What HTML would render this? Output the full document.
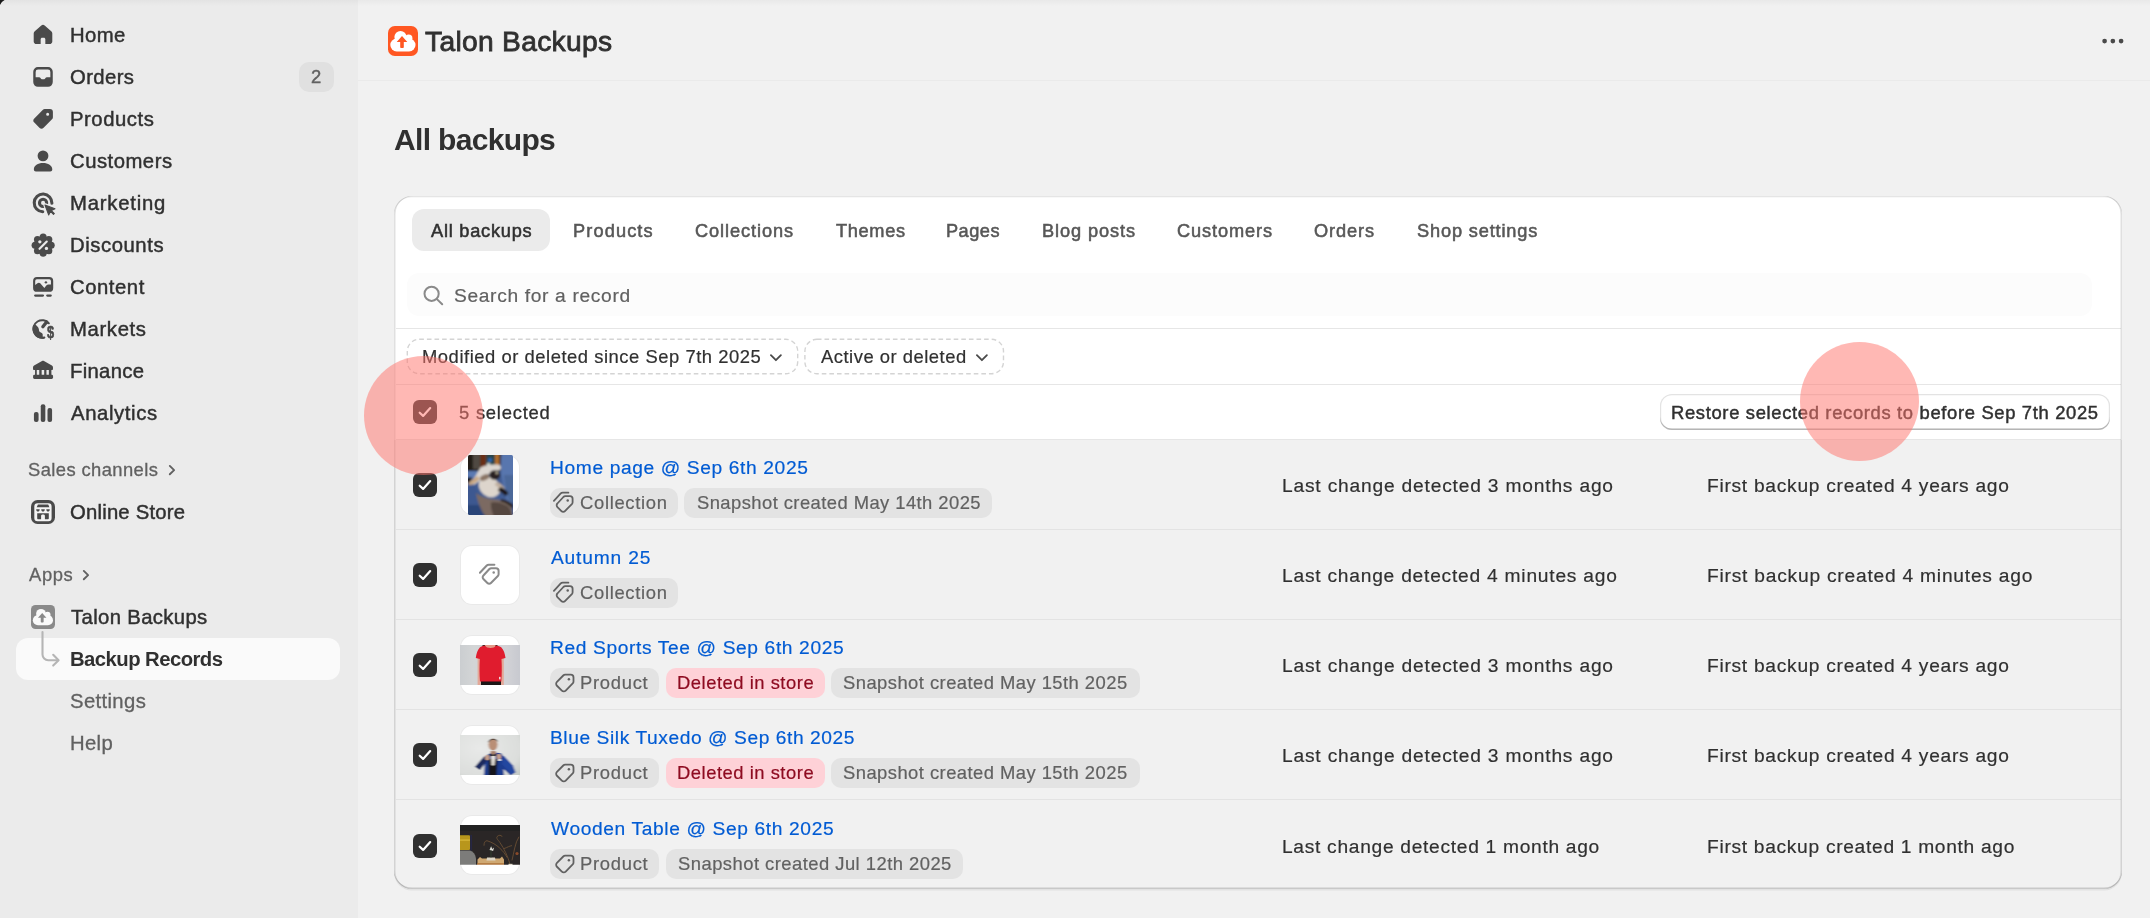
<!DOCTYPE html>
<html lang="en">
<head>
<meta charset="utf-8">
<title>Talon Backups – All backups</title>
<style>
html,body{margin:0;padding:0}
body{width:2150px;height:918px;overflow:hidden;position:relative;background:#f1f1f1;font-family:"Liberation Sans",sans-serif;-webkit-font-smoothing:antialiased}
.abs,.t,svg.i{position:absolute}
.t{white-space:nowrap;display:block;will-change:transform;margin:0;padding:0;font-weight:400;text-decoration:none}
#sidebar{position:absolute;left:0;top:0;width:358px;height:918px;background:#ebebeb}
#main{position:absolute;left:358px;top:0;width:1792px;height:918px;background:#f1f1f1}
#topshade{position:absolute;left:0;top:0;width:2150px;height:6px;background:linear-gradient(rgba(0,0,0,.035),rgba(0,0,0,0))}
.navsel{left:16px;top:638px;width:324px;height:42px;border-radius:12px;background:#fafafa}
.count{left:299px;top:62px;width:35px;height:30px;border-radius:10px;background:#e0e0e0}
#hdrline{left:358px;top:80px;width:1792px;height:1px;background:#eaeaea}
#card{left:394px;top:196px;width:1728px;height:693px;border-radius:18px;background:#fff;overflow:hidden}
#cardshadow{left:394px;top:196px;width:1728px;height:693px;border-radius:18px;z-index:5;pointer-events:none;
 box-shadow:0 1.5px 0 rgba(26,26,26,.07),inset 1.5px 0 0 rgba(0,0,0,.12),inset -1.5px 0 0 rgba(0,0,0,.12),inset 0 -1.5px 0 rgba(0,0,0,.17),inset 0 1.2px 0 rgba(204,204,204,.5)}
.tabsel{left:412px;top:209.3px;width:138px;height:42.2px;border-radius:12px;background:#ebebeb}
.search{left:406.5px;top:273px;width:1685px;height:43px;border-radius:12px;background:#fcfcfc}
.hl{left:395.5px;width:1725px;height:1.5px;background:#e6e6e6}
.rowbg{left:0;top:244px;width:1728px;height:449px;background:#f1f1f1}
.pill{height:33px;border-radius:12px;border:1.2px dashed #cfcfcf;box-sizing:content-box}
.btn{left:1659.5px;top:394px;width:450px;height:36px;border-radius:12px;background:#fff;box-sizing:border-box;
 box-shadow:inset 0 -1.5px 0 #b5b5b5,inset 0 0 0 1.2px #e3e3e3,inset 0 1px 0 1.5px #fff}
.cb{width:24px;height:24px;border-radius:6px;background:#303030}
.thumb{width:58px;height:58px;border-radius:11px;background:#fff;box-shadow:0 0 0 1px rgba(0,0,0,.03)}
.badge{height:30px;border-radius:10px;background:#e3e3e3}
.badge.crit{background:#fed1d7}
.dot{width:5px;height:5px;border-radius:50%;background:#4a4a4a;top:38.5px}
.halo{z-index:9;width:119px;height:119px;border-radius:50%;background:rgba(255,118,112,.52)}
</style>
</head>
<body>
<nav id="sidebar" aria-label="Main navigation">
<div id="navsel" class="abs navsel"></div>
<div class="abs count"></div>
<svg class="i" style="left:28px;top:20px" width="30" height="30" viewBox="0 0 20 20" fill="#4a4a4a"><path d="M10 3.2c.4 0 .8.15 1.1.4l4.4 3.9c.45.4.7.95.7 1.55v5.2c0 .95-.8 1.75-1.75 1.75h-2.9v-3.2c0-.55-.45-1-1-1h-1.1c-.55 0-1 .45-1 1v3.2h-2.9c-.95 0-1.75-.8-1.75-1.75v-5.2c0-.6.25-1.15.7-1.55l4.400-3.9c.3-.25.7-.4 1.1-.4z"/></svg>
<svg class="i" style="left:28px;top:62px" width="30" height="30" viewBox="0 0 20 20" fill="#4a4a4a"><path fill-rule="evenodd" d="M6.6 3.4h6.8a3.1 3.1 0 0 1 3.1 3.1v6.9a3.1 3.1 0 0 1-3.1 3.1h-6.8a3.1 3.1 0 0 1-3.1-3.1v-6.900a3.100 3.100 0 0 1 3.100-3.100zM6.700 5a1.600 1.600 0 0 0-1.600 1.600v3.500h2.400c.3 0 .55.150.7.4l.35.55c.15.250.4.4.7.4h1.500c.3 0 .55-.15.7-.4l.35-.55c.150-.25.4-.4.7-.4h2.400v-3.500a1.600 1.600 0 0 0-1.600-1.600z"/></svg>
<svg class="i" style="left:28px;top:104px" width="30" height="30" viewBox="0 0 20 20" fill="#4a4a4a"><path fill-rule="evenodd" d="M11.200 3.400h3.400a2 2 0 0 1 2 2v3.400c0 .55-.2 1.050-.6 1.400l-5.600 5.600a2 2 0 0 1-2.800 0l-3.400-3.400a2 2 0 0 1 0-2.800l5.600-5.600c.35-.4.85-.6 1.400-.6zM13.100 5.900a1 1 0 1 0 0 2a1 1 0 0 0 0-2z"/></svg>
<svg class="i" style="left:28px;top:146px" width="30" height="30" viewBox="0 0 20 20" fill="#4a4a4a"><circle cx="10" cy="6.600" r="3.600"/><path d="M3.900 15.700c0-2.600 2.700-4.300 6.100-4.300s6.200 1.700 6.200 4.300c0 .75-.6 1.300-1.300 1.300h-9.700c-.7 0-1.300-.55-1.300-1.300z"/></svg>
<svg class="i" style="left:28px;top:188px" width="30" height="30" viewBox="0 0 20 20" fill="#4a4a4a"><g fill="none" stroke="#4a4a4a" stroke-width="2.050" stroke-linecap="round"><path d="M15.950 10.200a5.900 5.900 0 1 0-6.100 5.650"/><circle cx="10.050" cy="9.950" r="2.400"/></g><path d="M11.300 11.300L18 13.800 15.600 15 17.600 17 17 17.600 15 15.600 13.800 18Z" fill="#4a4a4a" stroke="#ebebeb" stroke-width="2.300" stroke-linejoin="round"/><path d="M11.300 11.300L18 13.800 15.600 15 17.600 17 17 17.600 15 15.600 13.800 18Z" stroke="#4a4a4a" stroke-width=".7" stroke-linejoin="round"/></svg>
<svg class="i" style="left:28px;top:230px" width="30" height="30" viewBox="0 0 20 20" fill="#4a4a4a"><circle cx="10.1" cy="10.1" r="6.1"/><circle cx="10.10" cy="4.75" r="2.350"/><circle cx="13.88" cy="6.32" r="2.350"/><circle cx="15.45" cy="10.10" r="2.350"/><circle cx="13.88" cy="13.88" r="2.350"/><circle cx="10.10" cy="15.45" r="2.350"/><circle cx="6.32" cy="13.88" r="2.350"/><circle cx="4.75" cy="10.10" r="2.350"/><circle cx="6.32" cy="6.32" r="2.350"/><path d="M7.700 12.500l4.800-4.800" stroke="#ebebeb" stroke-width="1.450" stroke-linecap="round"/><circle cx="7.900" cy="7.900" r="1.100" fill="#ebebeb"/><circle cx="12.300" cy="12.300" r="1.100" fill="#ebebeb"/></svg>
<svg class="i" style="left:28px;top:272px" width="30" height="30" viewBox="0 0 20 20" fill="#4a4a4a"><path fill-rule="evenodd" d="M6 3.400h8.200a2.600 2.600 0 0 1 2.600 2.600v4.600a2.600 2.600 0 0 1-2.600 2.600h-8.200a2.600 2.600 0 0 1-2.600-2.600v-4.600a2.600 2.600 0 0 1 2.600-2.600zM4.800 6v2.700l1.500-1.200c.55-.45 1.300-.45 1.850 0l2.750 3.100 1.300-1.600c.4-.4.900-.6 1.450-.6h1.650v-2.400a1.100 1.100 0 0 0-1.100-1.100h-8.300a1.100 1.100 0 0 0-1.100 1.100z"/><circle cx="11.950" cy="6.900" r=".800"/><rect x="4.050" y="14.950" width="6.650" height="1.550" rx=".775"/><rect x="12.100" y="14.950" width="3.800" height="1.550" rx=".775"/></svg>
<svg class="i" style="left:28px;top:314px;will-change:transform" width="30" height="30" viewBox="0 0 20 20" fill="#4a4a4a"><path d="M13.900 6.200A5.850 5.850 0 1 0 10.900 15.650" fill="none" stroke="#4a4a4a" stroke-width="1.350" stroke-linecap="round"/><path d="M4 7.100L5.300 7.400C6.500 8.400 7.250 9.500 7.300 10.500C7.300 11.500 7.700 12 8.600 12.400C9.600 12.800 9.900 13.400 9.800 14.200L9.800 15.100L11.200 15.500L10.900 16.300A6.500 6.500 0 0 1 3.300 8Z"/><path d="M12.400 5.300L9.900 8.500" stroke="#4a4a4a" stroke-width="2.200" stroke-linecap="round"/><path d="M11.200 4.300l2.700 1.200-1.200 1.300z"/><text transform="translate(15.050 15.700) scale(.76 1)" font-family="Liberation Sans, sans-serif" font-weight="700" font-size="11.200" text-anchor="middle" fill="#4a4a4a" stroke="#4a4a4a" stroke-width=".35">$</text></svg>
<svg class="i" style="left:28px;top:356px" width="30" height="30" viewBox="0 0 20 20" fill="#4a4a4a"><path d="M9.350 3.350c.4-.22.900-.22 1.300 0l5.300 2.900c.45.250.7.700.7 1.200v1.150c0 .4-.3.700-.7.700h-11.900c-.4 0-.7-.3-.7-.700v-1.150c0-.5.250-.950.700-1.200z"/><rect x="4.700" y="9" width="1.150" height="4"/><rect x="7.500" y="9" width="1.600" height="4"/><rect x="10.800" y="9" width="1.500" height="4"/><rect x="13.900" y="9" width="1.700" height="4"/><rect x="3.400" y="12.500" width="13.300" height="2.750" rx=".900"/></svg>
<svg class="i" style="left:28px;top:398px" width="30" height="30" viewBox="0 0 20 20" fill="#4a4a4a"><rect x="3.950" y="9.300" width="3.100" height="6.700" rx="1.400"/><rect x="8.500" y="4.100" width="3.050" height="11.900" rx="1.400"/><rect x="13" y="6.600" width="3.050" height="9.400" rx="1.400"/></svg>
<svg class="i" style="left:31px;top:500px" width="24" height="24" viewBox="0 0 24 24"><rect width="24" height="24" rx="6.500" fill="#4a4a4a"/><rect x="3.300" y="3.200" width="17.300" height="18" rx="3.200" fill="#f4f4f4"/>
<path d="M6.900 4.600h10.300l1.200 2.700h-12.700z" fill="#4a4a4a"/>
<path d="M5.200 9.200h3.500c0 1.400-.8 2.400-1.750 2.400s-1.750-1-1.750-2.400zM10.200 9.200h3.600c0 1.400-.8 2.400-1.800 2.400s-1.800-1-1.800-2.400zM15.300 9.200h3.500c0 1.400-.8 2.400-1.750 2.400s-1.750-1-1.750-2.400z" fill="#4a4a4a"/>
<path d="M6.200 13.200h11.600v5c0 .6-.4 1-1 1h-2.900v-3.200c0-.8-.6-1.400-1.400-1.400h-1c-.8 0-1.400.6-1.400 1.400v3.200h-2.900c-.6 0-1-.4-1-1z" fill="#4a4a4a"/></svg>
<svg class="i" style="left:31px;top:605px" width="24" height="24" viewBox="0 0 30 30"><rect width="30" height="30" rx="5.6" fill="#8a8a8a"/>
<g fill="#fafafa"><circle cx="12.500" cy="11" r="6.100"/><circle cx="20.700" cy="12.200" r="3.700"/><rect x="2.300" y="12.600" width="25.200" height="12.800" rx="6.400"/></g>
<path d="M14 10l5.300 5.900h-3.500v5c0 .55-.45 1-1 1h-1.600c-.55 0-1-.45-1-1v-5h-3.500z" fill="#8a8a8a"/></svg>
<svg class="i" style="left:36px;top:628px" width="28" height="40" viewBox="0 0 28 40" fill="none" stroke="#b5b5b5" stroke-width="2.100" stroke-linecap="round" stroke-linejoin="round"><path d="M6.500 4v22.500a5.700 5.700 0 0 0 5.700 5.700h9.800"/><path d="M17.200 26.800l5.400 5.400-5.400 5.400"/></svg>
<svg class="i" style="left:165px;top:462px" width="14" height="16" viewBox="0 0 14 16" fill="none" stroke="#616161" stroke-width="1.900" stroke-linecap="round" stroke-linejoin="round"><path d="M4.800 3.900l4.300 4.200-4.300 4.200"/></svg>
<svg class="i" style="left:79.300px;top:567.300px" width="14" height="16" viewBox="0 0 14 16" fill="none" stroke="#616161" stroke-width="1.900" stroke-linecap="round" stroke-linejoin="round"><path d="M4.800 3.900l4.300 4.200-4.300 4.200"/></svg>
<a class="t" style="left:69.82px;top:22.97px;font-size:20.3px;line-height:24px;letter-spacing:0.383px;color:#303030;-webkit-text-stroke:0.45px #303030">Home</a>
<a class="t" style="left:69.88px;top:64.97px;font-size:20.3px;line-height:24px;letter-spacing:0.395px;color:#303030;-webkit-text-stroke:0.45px #303030">Orders</a>
<a class="t" style="left:69.82px;top:106.97px;font-size:20.3px;line-height:24px;letter-spacing:0.546px;color:#303030;-webkit-text-stroke:0.45px #303030">Products</a>
<a class="t" style="left:70.19px;top:148.97px;font-size:20.3px;line-height:24px;letter-spacing:0.497px;color:#303030;-webkit-text-stroke:0.45px #303030">Customers</a>
<a class="t" style="left:70.12px;top:190.97px;font-size:20.3px;line-height:24px;letter-spacing:0.785px;color:#303030;-webkit-text-stroke:0.45px #303030">Marketing</a>
<a class="t" style="left:69.82px;top:232.97px;font-size:20.3px;line-height:24px;letter-spacing:0.559px;color:#303030;-webkit-text-stroke:0.45px #303030">Discounts</a>
<a class="t" style="left:70.23px;top:274.97px;font-size:20.3px;line-height:24px;letter-spacing:0.551px;color:#303030;-webkit-text-stroke:0.45px #303030">Content</a>
<a class="t" style="left:69.82px;top:316.97px;font-size:20.3px;line-height:24px;letter-spacing:0.648px;color:#303030;-webkit-text-stroke:0.45px #303030">Markets</a>
<a class="t" style="left:69.99px;top:358.97px;font-size:20.3px;line-height:24px;letter-spacing:0.308px;color:#303030;-webkit-text-stroke:0.45px #303030">Finance</a>
<a class="t" style="left:70.81px;top:400.97px;font-size:20.3px;line-height:24px;letter-spacing:0.618px;color:#303030;-webkit-text-stroke:0.45px #303030">Analytics</a>
<span class="t" style="left:311.40px;top:65.62px;font-size:18.4px;line-height:22px;letter-spacing:0.000px;color:#616161;-webkit-text-stroke:0.45px #616161">2</span>
<a class="t" style="left:28.14px;top:458.62px;font-size:18.4px;line-height:22px;letter-spacing:0.397px;color:#616161;-webkit-text-stroke:0.3px #616161">Sales channels</a>
<a class="t" style="left:70.36px;top:499.97px;font-size:20.3px;line-height:24px;letter-spacing:0.204px;color:#303030;-webkit-text-stroke:0.45px #303030">Online Store</a>
<a class="t" style="left:28.75px;top:563.62px;font-size:18.4px;line-height:22px;letter-spacing:0.627px;color:#616161;-webkit-text-stroke:0.3px #616161">Apps</a>
<a class="t" style="left:70.93px;top:604.97px;font-size:20.3px;line-height:24px;letter-spacing:0.361px;color:#303030;-webkit-text-stroke:0.45px #303030">Talon Backups</a>
<a class="t" style="left:69.75px;top:646.97px;font-size:20.3px;line-height:24px;letter-spacing:-0.547px;color:#303030;font-weight:700">Backup Records</a>
<a class="t" style="left:70.09px;top:688.97px;font-size:20.3px;line-height:24px;letter-spacing:0.358px;color:#616161;-webkit-text-stroke:0.3px #616161">Settings</a>
<a class="t" style="left:69.86px;top:730.97px;font-size:20.3px;line-height:24px;letter-spacing:0.322px;color:#616161;-webkit-text-stroke:0.3px #616161">Help</a>
</nav>
<main id="main"></main>
<div id="topshade"></div>
<svg class="i" style="left:0;top:0" width="8" height="8" viewBox="0 0 8 8"><path d="M0 0H5.300Q1.800 1.600 0 5.700Z" fill="#f6f6f6"/><path d="M0 0H4.700Q1.500 1.400 0 5Z" fill="#1a1a1a"/></svg>
<header>
<div id="hdrline" class="abs"></div>
<svg class="i" style="left:388px;top:26px" width="30" height="30" viewBox="0 0 30 30"><rect width="30" height="30" rx="6.8" fill="#ff5722"/>
<g fill="#fff"><circle cx="12.500" cy="11" r="6.100"/><circle cx="20.700" cy="12.200" r="3.700"/><rect x="2.300" y="12.600" width="25.200" height="12.800" rx="6.400"/></g>
<path d="M14 10l5.300 5.900h-3.500v5c0 .55-.45 1-1 1h-1.600c-.55 0-1-.45-1-1v-5h-3.500z" fill="#ff5722"/></svg>
<span class="t" style="left:425.41px;top:24.23px;font-size:28.2px;line-height:34px;letter-spacing:0.310px;color:#303030;-webkit-text-stroke:0.8px #303030">Talon Backups</span>
<h1 class="t" style="left:394.49px;top:121.60px;font-size:30.0px;line-height:36px;letter-spacing:-0.665px;color:#303030;font-weight:700">All backups</h1>
<svg class="i" style="left:2098px;top:35px" width="30" height="12" viewBox="0 0 30 12" fill="#4a4a4a"><circle cx="6.600" cy="6.050" r="2.350"/><circle cx="14.850" cy="6.050" r="2.350"/><circle cx="23.100" cy="6.050" r="2.350"/></svg>
</header>
<section id="cardwrap">
<div id="card" class="abs"><div class="abs rowbg"></div></div>
<div id="cardshadow" class="abs"></div>
<div class="abs tabsel"></div>
<div class="abs search"></div>
<div class="abs hl" style="top:327.7px"></div>
<div class="abs hl" style="top:383.8px"></div>
<div class="abs hl" style="top:438.5px"></div>
<div class="abs hl" style="top:528.8px;background:#e3e3e3"></div>
<div class="abs hl" style="top:618.8px;background:#e3e3e3"></div>
<div class="abs hl" style="top:708.8px;background:#e3e3e3"></div>
<div class="abs hl" style="top:798.8px;background:#e3e3e3"></div>
<svg class="i" style="left:404px;top:336px" width="602" height="42" viewBox="0 0 602 42" fill="none" stroke="#d4d4d4" stroke-width="1.4" stroke-dasharray="4.6 3"><rect x="3.300" y="3.300" width="390.400" height="34.400" rx="12"/><rect x="400.900" y="3.300" width="198.600" height="34.400" rx="12"/></svg>
<div class="abs btn"></div>
<svg class="i" style="left:420px;top:282px" width="26" height="26" viewBox="0 0 26 26" fill="none" stroke="#8a8a8a" stroke-width="2" stroke-linecap="round"><circle cx="11.600" cy="11.800" r="7.100"/><path d="M16.900 17.100l5.300 5.200"/></svg>
<svg class="i" style="left:768.3px;top:351px" width="16" height="13" viewBox="0 0 16 13" fill="none" stroke="#4a4a4a" stroke-width="1.800" stroke-linecap="round" stroke-linejoin="round"><path d="M2.900 4.200l5 5 5-5"/></svg>
<svg class="i" style="left:973.9px;top:351px" width="16" height="13" viewBox="0 0 16 13" fill="none" stroke="#4a4a4a" stroke-width="1.800" stroke-linecap="round" stroke-linejoin="round"><path d="M2.900 4.200l5 5 5-5"/></svg>
<div class="abs cb" style="left:413.300px;top:400px"><svg width="24" height="24" viewBox="0 0 24 24" fill="none" stroke="#fff" stroke-width="2.200" stroke-linecap="round" stroke-linejoin="round"><path d="M6.700 12.700l3.400 3.200 7.100-7.800"/></svg></div>
<a class="t" role="tab" style="left:431.40px;top:219.69px;font-size:18.2px;line-height:22px;letter-spacing:0.763px;color:#303030;-webkit-text-stroke:0.55px #303030">All backups</a>
<a class="t" role="tab" style="left:573.26px;top:219.69px;font-size:18.2px;line-height:22px;letter-spacing:1.121px;color:#575757;-webkit-text-stroke:0.55px #575757">Products</a>
<a class="t" role="tab" style="left:695.44px;top:219.69px;font-size:18.2px;line-height:22px;letter-spacing:0.915px;color:#575757;-webkit-text-stroke:0.55px #575757">Collections</a>
<a class="t" role="tab" style="left:836.32px;top:219.69px;font-size:18.2px;line-height:22px;letter-spacing:0.669px;color:#575757;-webkit-text-stroke:0.55px #575757">Themes</a>
<a class="t" role="tab" style="left:946.28px;top:219.69px;font-size:18.2px;line-height:22px;letter-spacing:0.479px;color:#575757;-webkit-text-stroke:0.55px #575757">Pages</a>
<a class="t" role="tab" style="left:1042.20px;top:219.69px;font-size:18.2px;line-height:22px;letter-spacing:0.894px;color:#575757;-webkit-text-stroke:0.55px #575757">Blog posts</a>
<a class="t" role="tab" style="left:1177.36px;top:219.69px;font-size:18.2px;line-height:22px;letter-spacing:0.888px;color:#575757;-webkit-text-stroke:0.55px #575757">Customers</a>
<a class="t" role="tab" style="left:1314.31px;top:219.69px;font-size:18.2px;line-height:22px;letter-spacing:0.888px;color:#575757;-webkit-text-stroke:0.55px #575757">Orders</a>
<a class="t" role="tab" style="left:1417.11px;top:219.69px;font-size:18.2px;line-height:22px;letter-spacing:0.846px;color:#575757;-webkit-text-stroke:0.55px #575757">Shop settings</a>
<span class="t" style="left:454.43px;top:283.85px;font-size:19.2px;line-height:23px;letter-spacing:0.660px;color:#616161;-webkit-text-stroke:0.2px #616161">Search for a record</span>
<span class="t" style="left:422.16px;top:345.62px;font-size:18.4px;line-height:22px;letter-spacing:0.534px;color:#303030;-webkit-text-stroke:0.2px #303030">Modified or deleted since Sep 7th 2025</span>
<span class="t" style="left:821.19px;top:345.62px;font-size:18.4px;line-height:22px;letter-spacing:0.508px;color:#303030;-webkit-text-stroke:0.2px #303030">Active or deleted</span>
<span class="t" style="left:458.63px;top:401.62px;font-size:18.4px;line-height:22px;letter-spacing:0.776px;color:#303030;-webkit-text-stroke:0.3px #303030">5 selected</span>
<span class="t" role="button" style="left:1670.71px;top:401.62px;font-size:18.4px;line-height:22px;letter-spacing:0.661px;color:#303030;-webkit-text-stroke:0.45px #303030">Restore selected records to before Sep 7th 2025</span>
<div class="abs cb" style="left:413.300px;top:473px"><svg width="24" height="24" viewBox="0 0 24 24" fill="none" stroke="#fff" stroke-width="2.200" stroke-linecap="round" stroke-linejoin="round"><path d="M6.700 12.700l3.400 3.200 7.100-7.800"/></svg></div>
<div class="abs thumb" style="left:461px;top:455.5px"></div>
<div class="abs cb" style="left:413.300px;top:563px"><svg width="24" height="24" viewBox="0 0 24 24" fill="none" stroke="#fff" stroke-width="2.200" stroke-linecap="round" stroke-linejoin="round"><path d="M6.700 12.700l3.400 3.200 7.100-7.800"/></svg></div>
<div class="abs thumb" style="left:461px;top:545.5px"></div>
<div class="abs cb" style="left:413.300px;top:653px"><svg width="24" height="24" viewBox="0 0 24 24" fill="none" stroke="#fff" stroke-width="2.200" stroke-linecap="round" stroke-linejoin="round"><path d="M6.700 12.700l3.400 3.200 7.100-7.800"/></svg></div>
<div class="abs thumb" style="left:461px;top:635.5px"></div>
<div class="abs cb" style="left:413.300px;top:743px"><svg width="24" height="24" viewBox="0 0 24 24" fill="none" stroke="#fff" stroke-width="2.200" stroke-linecap="round" stroke-linejoin="round"><path d="M6.700 12.700l3.400 3.200 7.100-7.800"/></svg></div>
<div class="abs thumb" style="left:461px;top:725.5px"></div>
<div class="abs cb" style="left:413.300px;top:833.75px"><svg width="24" height="24" viewBox="0 0 24 24" fill="none" stroke="#fff" stroke-width="2.200" stroke-linecap="round" stroke-linejoin="round"><path d="M6.700 12.700l3.400 3.200 7.100-7.800"/></svg></div>
<div class="abs thumb" style="left:461px;top:816.25px"></div>
<svg class="i" style="left:467.500px;top:455px" width="45" height="60" viewBox="0 0 45 60"><defs><filter id="b1" x="-10%" y="-10%" width="120%" height="120%"><feGaussianBlur stdDeviation="1.150"/></filter><clipPath id="c1"><rect width="45" height="60" rx="1.500"/></clipPath></defs><g clip-path="url(#c1)"><g filter="url(#b1)">
<rect x="-4" y="-4" width="53" height="68" fill="#405c93"/>
<rect x="-4" y="-4" width="39" height="20" fill="#221c18"/>
<rect x="5" y="-3" width="7.500" height="17" fill="#4f4843"/><rect x="12.500" y="-3" width="5.500" height="18" fill="#6b2f14"/>
<rect x="18" y="-3" width="9" height="15" fill="#2a4446"/><circle cx="22" cy="5" r="2" fill="#2b68c0"/><circle cx="20.500" cy="9.500" r="1.700" fill="#cfd4d0"/>
<rect x="27" y="-3" width="4.500" height="13" fill="#b06d2c"/><rect x="31.500" y="-3" width="3" height="11" fill="#32241a"/>
<path d="M33.500 -4h15v52h-9c-3-12-6.500-26-7-36z" fill="#5876ae"/>
<path d="M36 20h13v28h-8c-2-9-4-18-5-28z" fill="#4b6899"/>
<path d="M-4 16h15c1 2 .5 5-1 7h-14z" fill="#5b7ab2"/>
<path d="M-4 22.500h8l-1.500 5h-6.500z" fill="#15151a"/>
<path d="M-4 30h10c4 10 10 20 20 32h-30z" fill="#3c5890"/>
<path d="M-4 50h20l9 14h-29z" fill="#2b4478"/>
<path d="M12.500 12.500c5-2.500 13-3.500 19-2.500 1.800 1.200 1.800 3.400.5 4.800-5 1.500-11 3.500-15 7-4 3-7 5.500-11 8-2.500-.5-3-2.500-2-4 3.500-4 5.500-8.500 8.500-13.300z" fill="#dcd6d0"/>
<path d="M1 27.500c2-2 5-3.800 8.500-6.500l2 3c-2.500 3-6 5.200-9.500 6.200-1.500-.5-2-1.700-1-2.700z" fill="#c9a883"/>
<ellipse cx="21.500" cy="32" rx="11.500" ry="9.500" transform="rotate(38 21.500 32)" fill="#ddd5cc"/>
<ellipse cx="16.500" cy="22.500" rx="5" ry="2.800" transform="rotate(-25 16.500 22.500)" fill="#8a7565"/>
<ellipse cx="26.800" cy="20" rx="5.500" ry="4.800" fill="#2a2420"/>
<circle cx="28.800" cy="17.800" r="1.400" fill="#b8b09a"/>
<path d="M29 27c3 1.200 6 3.500 8 6.500l-4 2.500c-2-2.500-4-5-6.500-6.500z" fill="#bfae9e"/>
<path d="M32.500 32c3 1 6.500 3.500 8 6.500l-3 2.500c-2.500-2.500-5-4.500-8-5.500z" fill="#1d1715"/>
<path d="M8 38c4 3.500 12 6.500 21.500 6.500 5 1 9.500 3 12.500 6 2 3 3 7 2.500 14h-24c-6-5.500-10.500-15-12.500-26.500z" fill="#7b6b62"/>
<path d="M23 47.500c6-1 14 1 18 5 2 3 3 7 2.500 12h-16c-3-5-5-11.500-4.500-17z" fill="#54463f"/>
<path d="M33 44c4 .5 8.500 2.500 12 5.500v4.500c-3.500-3.500-7.500-6.500-12.500-7.500z" fill="#2a201c"/>
</g></g></svg>
<svg class="i" style="left:460px;top:644.600px" width="60" height="40.200" viewBox="0 0 60 41" preserveAspectRatio="none"><defs><filter id="b2" x="-10%" y="-10%" width="120%" height="120%"><feGaussianBlur stdDeviation="0.700"/></filter><clipPath id="c2"><rect width="60" height="41"/></clipPath><linearGradient id="g2" x1="0" x2="1"><stop offset="0" stop-color="#c9cccf"/><stop offset=".25" stop-color="#d3d5d6"/><stop offset=".75" stop-color="#d2d2d6"/><stop offset="1" stop-color="#c5c7ce"/></linearGradient></defs><g clip-path="url(#c2)"><g filter="url(#b2)">
<rect x="-3" y="-3" width="66" height="47" fill="url(#g2)"/>
<rect x="17.600" y="10" width="3.200" height="34" fill="#e3a898"/><rect x="40.600" y="10" width="3.200" height="34" fill="#e3a898"/>
<rect x="21" y="35" width="20" height="9" fill="#1a1214"/>
<path d="M22.500 -3h15v5h-15z" fill="#3a2520"/>
<path d="M25 0h10.500v6h-10.500z" fill="#e29a88"/>
<path d="M20 2.200c2-1 3.800-1.500 5.300-1.500 1 3 9.400 3 10.400 0 1.500 0 3.500.5 5.500 1.500 2.600 2.600 3.800 6.800 4.300 11l-4 1c.4 8 .4 15.500-.2 23h-21.300c-.6-7.500-.6-15-.200-23l-4-1c.5-4.200 1.700-8.400 4.200-11z" fill="#e01c2e"/>
<rect x="39" y="32.500" width="1.600" height="2.600" fill="#f0d8dc"/>
</g></g></svg>
<svg class="i" style="left:460px;top:734.700px" width="60" height="40.200" viewBox="0 0 60 41" preserveAspectRatio="none"><defs><filter id="b3" x="-10%" y="-10%" width="120%" height="120%"><feGaussianBlur stdDeviation="0.800"/></filter><clipPath id="c3"><rect width="60" height="41"/></clipPath><radialGradient id="g3" cx=".35" cy=".35" r=".85"><stop offset="0" stop-color="#e8e9e8"/><stop offset=".7" stop-color="#dcdedc"/><stop offset="1" stop-color="#c2c7c2"/></radialGradient></defs><g clip-path="url(#c3)"><g filter="url(#b3)">
<rect x="-3" y="-3" width="66" height="47" fill="url(#g3)"/>
<path d="M24.500 22l7.500-4.500 9 1 7 8.500 6 11-3.500 3-7-6.500 1 10h-21l1-13z" fill="#1f3c90"/>
<path d="M15 32.500l9-10.500 4 2.800-8 11z" fill="#1a2a5e"/>
<path d="M44 21.500l9 9.500 2.500 7-4 2.500-9.500-11z" fill="#2446a0"/>
<path d="M28.500 24.500h9l-1 20h-8z" fill="#18181a"/>
<path d="M31 19.500h4.500l-1 10.500-1.500 2-1.500-2z" fill="#ece8e0"/>
<ellipse cx="33" cy="9.800" rx="4.500" ry="6.100" fill="#b98f76"/>
<path d="M28.400 8c-.4-5 9.300-6 9.500-.5-1-1.700-3-2.800-4.800-2.800s-3.700 1.300-4.700 3.300z" fill="#3a2a20"/>
<path d="M30.500 16.500h5.500v3.500h-5.500z" fill="#a9826c"/>
<path d="M30.300 19.200l2.900 1 2.900-1v2.700l-2.900-1-2.900 1z" fill="#15100e"/>
<ellipse cx="27.300" cy="23" rx="2.300" ry="2.900" fill="#c8a088"/><ellipse cx="38.900" cy="22" rx="2.300" ry="2.900" fill="#c8a088"/>
<rect x="38" y="24.500" width="3" height="2" fill="#e4e4ec"/>
</g></g></svg>
<svg class="i" style="left:460px;top:825px" width="60" height="39.800" viewBox="0 0 60 40.500" preserveAspectRatio="none"><defs><filter id="b4" x="-10%" y="-10%" width="120%" height="120%"><feGaussianBlur stdDeviation="0.600"/></filter><clipPath id="c4"><rect width="60" height="40.500"/></clipPath></defs><g clip-path="url(#c4)"><g filter="url(#b4)">
<rect x="-3" y="-3" width="66" height="47" fill="#2a2826"/>
<rect x="-3" y="-3" width="66" height="9" fill="#242220"/>
<rect x="-3" y="10.500" width="13" height="15" rx="1" fill="#b8961c"/><rect x="-3" y="14.500" width="13" height="1.800" fill="#cfae30"/>
<rect x="10.500" y="10" width="1.300" height="16" fill="#25284a"/>
<path d="M-3 26h13c3 1 5.500 4 6 8v10h-19z" fill="#7b7b7a"/>
<path d="M17.500 35l2.500-2.500 2 1.500h18l2-2 2 3v10h-26.500z" fill="#cfa872"/>
<rect x="17" y="39" width="27" height="1.500" fill="#a86a30"/>
<path d="M27 33h8l.5 3h-9z" fill="#ddd5c5"/>
<g fill="none" stroke="#6a4c34" stroke-width=".9"><path d="M50 40c-2-8-6-16-10-22-1-2-4-4-3-6 1-2 5-2 5 0"/><path d="M47 33c-3-6-10-14-20-17-2 0-3 2-3 5"/><path d="M52 36c2-8 3-18 7-24"/><path d="M44 24c3-1 6-3 8-3"/></g>
<circle cx="57" cy="29" r="1.600" fill="#8a4a2a"/>
<path d="M29.500 25.500l1.600-4 1.200 3 1.800-1.500-1 3.500z" fill="#d8d8d0"/>
<rect x="30.500" y="26" width="1" height="7" fill="#303a30"/>
<path d="M48.500 39.500h4v3h-4z" fill="#d8d0c0"/>
</g></g></svg>
<svg class="i" style="left:479.3px;top:562.5px" width="22" height="24" viewBox="0 0 22 24" fill="none" stroke="#8a8a8a" stroke-width="2.0" stroke-linecap="round" stroke-linejoin="round"><path d="M12.300 5.200h4.700a2.600 2.600 0 0 1 2.600 2.600v3.400c0 .7-.3 1.350-.75 1.850l-6.900 7a2.500 2.500 0 0 1-3.550 0l-4-4a2.500 2.500 0 0 1 0-3.550l6-6.500c.5-.5 1.150-.8 1.900-.8z"/><path d="M.900 9.800l6.600-7.100c.6-.65 1.400-1 2.300-1h5.600"/><circle cx="14.700" cy="9.500" r="1.250" fill="#8a8a8a" stroke="none"/></svg>
<div class="abs badge " style="left:550px;top:488px;width:128.0px"></div>
<div class="abs badge " style="left:684.4px;top:488px;width:307.7px"></div>
<svg class="i" style="left:553.4px;top:490.9px" width="22" height="24" viewBox="0 0 22 24" fill="none" stroke="#616161" stroke-width="1.8" stroke-linecap="round" stroke-linejoin="round"><path d="M12.300 5.200h4.700a2.600 2.600 0 0 1 2.600 2.600v3.400c0 .7-.3 1.350-.75 1.850l-6.900 7a2.500 2.500 0 0 1-3.550 0l-4-4a2.500 2.500 0 0 1 0-3.550l6-6.500c.5-.5 1.150-.8 1.900-.8z"/><path d="M.900 9.800l6.600-7.100c.6-.65 1.400-1 2.300-1h5.600"/><circle cx="14.700" cy="9.500" r="1.250" fill="#616161" stroke="none"/></svg>
<div class="abs badge " style="left:550px;top:578px;width:128.0px"></div>
<svg class="i" style="left:553.4px;top:580.9px" width="22" height="24" viewBox="0 0 22 24" fill="none" stroke="#616161" stroke-width="1.8" stroke-linecap="round" stroke-linejoin="round"><path d="M12.300 5.200h4.700a2.600 2.600 0 0 1 2.600 2.600v3.400c0 .7-.3 1.350-.75 1.850l-6.900 7a2.500 2.500 0 0 1-3.550 0l-4-4a2.500 2.500 0 0 1 0-3.550l6-6.500c.5-.5 1.150-.8 1.900-.8z"/><path d="M.900 9.800l6.600-7.100c.6-.65 1.400-1 2.300-1h5.600"/><circle cx="14.700" cy="9.500" r="1.250" fill="#616161" stroke="none"/></svg>
<div class="abs badge " style="left:550px;top:668px;width:109.3px"></div>
<div class="abs badge crit" style="left:665.8px;top:668px;width:159.2px"></div>
<div class="abs badge " style="left:831.2px;top:668px;width:308.6px"></div>
<svg class="i" style="left:553.3px;top:670.9px" width="23" height="24" viewBox="0 0 23 24" fill="none" stroke="#616161" stroke-width="1.8" stroke-linecap="round" stroke-linejoin="round"><path d="M12.200 3.700h5.600a2.700 2.700 0 0 1 2.700 2.700v4.100c0 .75-.3 1.450-.8 1.950l-7 7.200a2.700 2.700 0 0 1-3.850 0l-4.900-4.900a2.700 2.700 0 0 1 0-3.850l6.300-6.400c.5-.5 1.200-.8 1.950-.8z"/><circle cx="15.900" cy="8.200" r="1.250" fill="#616161" stroke="none"/></svg>
<div class="abs badge " style="left:550px;top:758px;width:109.3px"></div>
<div class="abs badge crit" style="left:665.8px;top:758px;width:159.2px"></div>
<div class="abs badge " style="left:831.2px;top:758px;width:308.6px"></div>
<svg class="i" style="left:553.3px;top:760.9px" width="23" height="24" viewBox="0 0 23 24" fill="none" stroke="#616161" stroke-width="1.8" stroke-linecap="round" stroke-linejoin="round"><path d="M12.200 3.700h5.600a2.700 2.700 0 0 1 2.700 2.700v4.100c0 .75-.3 1.450-.8 1.950l-7 7.200a2.700 2.700 0 0 1-3.850 0l-4.900-4.900a2.700 2.700 0 0 1 0-3.850l6.300-6.400c.5-.5 1.200-.8 1.950-.8z"/><circle cx="15.900" cy="8.200" r="1.250" fill="#616161" stroke="none"/></svg>
<div class="abs badge " style="left:550px;top:848.75px;width:109.3px"></div>
<div class="abs badge " style="left:665.8px;top:848.75px;width:297.2px"></div>
<svg class="i" style="left:553.3px;top:851.65px" width="23" height="24" viewBox="0 0 23 24" fill="none" stroke="#616161" stroke-width="1.8" stroke-linecap="round" stroke-linejoin="round"><path d="M12.200 3.700h5.600a2.700 2.700 0 0 1 2.700 2.700v4.100c0 .75-.3 1.450-.8 1.950l-7 7.200a2.700 2.700 0 0 1-3.850 0l-4.900-4.900a2.700 2.700 0 0 1 0-3.850l6.300-6.400c.5-.5 1.200-.8 1.950-.8z"/><circle cx="15.900" cy="8.200" r="1.250" fill="#616161" stroke="none"/></svg>
<a class="t" style="left:550.10px;top:455.85px;font-size:19.2px;line-height:23px;letter-spacing:0.625px;color:#005bd3;-webkit-text-stroke:0.2px #005bd3">Home page @ Sep 6th 2025</a>
<span class="t" style="left:579.70px;top:491.92px;font-size:18.4px;line-height:22px;letter-spacing:0.684px;color:#616161;-webkit-text-stroke:0.2px #616161">Collection</span>
<span class="t" style="left:696.98px;top:491.92px;font-size:18.4px;line-height:22px;letter-spacing:0.434px;color:#616161;-webkit-text-stroke:0.2px #616161">Snapshot created May 14th 2025</span>
<span class="t" style="left:1281.78px;top:474.05px;font-size:19.2px;line-height:23px;letter-spacing:0.811px;color:#303030;-webkit-text-stroke:0.2px #303030">Last change detected 3 months ago</span>
<span class="t" style="left:1707.12px;top:474.05px;font-size:19.2px;line-height:23px;letter-spacing:0.724px;color:#303030;-webkit-text-stroke:0.2px #303030">First backup created 4 years ago</span>
<a class="t" style="left:550.98px;top:545.85px;font-size:19.2px;line-height:23px;letter-spacing:0.813px;color:#005bd3;-webkit-text-stroke:0.2px #005bd3">Autumn 25</a>
<span class="t" style="left:579.70px;top:581.92px;font-size:18.4px;line-height:22px;letter-spacing:0.684px;color:#616161;-webkit-text-stroke:0.2px #616161">Collection</span>
<span class="t" style="left:1282.10px;top:564.05px;font-size:19.2px;line-height:23px;letter-spacing:0.773px;color:#303030;-webkit-text-stroke:0.2px #303030">Last change detected 4 minutes ago</span>
<span class="t" style="left:1707.12px;top:564.05px;font-size:19.2px;line-height:23px;letter-spacing:0.779px;color:#303030;-webkit-text-stroke:0.2px #303030">First backup created 4 minutes ago</span>
<a class="t" style="left:549.79px;top:635.85px;font-size:19.2px;line-height:23px;letter-spacing:0.623px;color:#005bd3;-webkit-text-stroke:0.2px #005bd3">Red Sports Tee @ Sep 6th 2025</a>
<span class="t" style="left:579.55px;top:671.92px;font-size:18.4px;line-height:22px;letter-spacing:0.724px;color:#616161;-webkit-text-stroke:0.2px #616161">Product</span>
<span class="t" style="left:676.79px;top:671.92px;font-size:18.4px;line-height:22px;letter-spacing:0.521px;color:#8e0b21;-webkit-text-stroke:0.2px #8e0b21">Deleted in store</span>
<span class="t" style="left:843.32px;top:671.92px;font-size:18.4px;line-height:22px;letter-spacing:0.455px;color:#616161;-webkit-text-stroke:0.2px #616161">Snapshot created May 15th 2025</span>
<span class="t" style="left:1281.78px;top:654.05px;font-size:19.2px;line-height:23px;letter-spacing:0.811px;color:#303030;-webkit-text-stroke:0.2px #303030">Last change detected 3 months ago</span>
<span class="t" style="left:1707.12px;top:654.05px;font-size:19.2px;line-height:23px;letter-spacing:0.724px;color:#303030;-webkit-text-stroke:0.2px #303030">First backup created 4 years ago</span>
<a class="t" style="left:549.79px;top:725.85px;font-size:19.2px;line-height:23px;letter-spacing:0.576px;color:#005bd3;-webkit-text-stroke:0.2px #005bd3">Blue Silk Tuxedo @ Sep 6th 2025</a>
<span class="t" style="left:579.55px;top:761.92px;font-size:18.4px;line-height:22px;letter-spacing:0.724px;color:#616161;-webkit-text-stroke:0.2px #616161">Product</span>
<span class="t" style="left:676.79px;top:761.92px;font-size:18.4px;line-height:22px;letter-spacing:0.521px;color:#8e0b21;-webkit-text-stroke:0.2px #8e0b21">Deleted in store</span>
<span class="t" style="left:843.32px;top:761.92px;font-size:18.4px;line-height:22px;letter-spacing:0.455px;color:#616161;-webkit-text-stroke:0.2px #616161">Snapshot created May 15th 2025</span>
<span class="t" style="left:1281.78px;top:744.05px;font-size:19.2px;line-height:23px;letter-spacing:0.811px;color:#303030;-webkit-text-stroke:0.2px #303030">Last change detected 3 months ago</span>
<span class="t" style="left:1707.12px;top:744.05px;font-size:19.2px;line-height:23px;letter-spacing:0.724px;color:#303030;-webkit-text-stroke:0.2px #303030">First backup created 4 years ago</span>
<a class="t" style="left:550.99px;top:816.60px;font-size:19.2px;line-height:23px;letter-spacing:0.629px;color:#005bd3;-webkit-text-stroke:0.2px #005bd3">Wooden Table @ Sep 6th 2025</a>
<span class="t" style="left:579.55px;top:852.67px;font-size:18.4px;line-height:22px;letter-spacing:0.724px;color:#616161;-webkit-text-stroke:0.2px #616161">Product</span>
<span class="t" style="left:677.80px;top:852.67px;font-size:18.4px;line-height:22px;letter-spacing:0.469px;color:#616161;-webkit-text-stroke:0.2px #616161">Snapshot created Jul 12th 2025</span>
<span class="t" style="left:1282.10px;top:834.80px;font-size:19.2px;line-height:23px;letter-spacing:0.702px;color:#303030;-webkit-text-stroke:0.2px #303030">Last change detected 1 month ago</span>
<span class="t" style="left:1707.12px;top:834.80px;font-size:19.2px;line-height:23px;letter-spacing:0.696px;color:#303030;-webkit-text-stroke:0.2px #303030">First backup created 1 month ago</span>
</section>
<div class="abs halo" style="left:364.3px;top:355.5px"></div>
<div class="abs halo" style="left:1799.6px;top:342.2px"></div>
</body>
</html>
